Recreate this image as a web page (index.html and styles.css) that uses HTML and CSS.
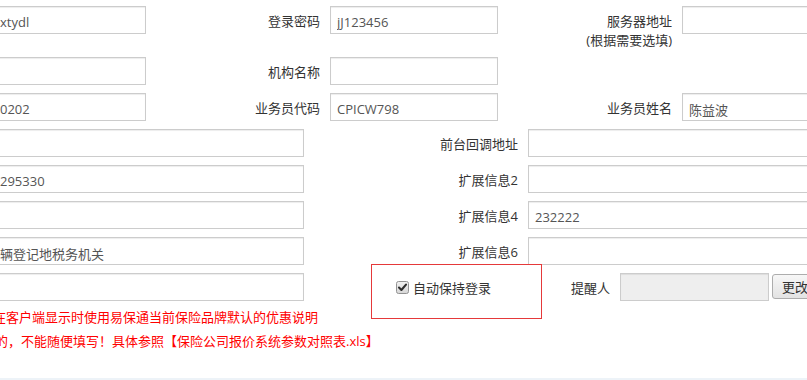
FILE: index.html
```html
<!DOCTYPE html>
<html lang="zh-CN">
<head>
<meta charset="utf-8">
<title>参数设置</title>
<link rel="stylesheet" href="styles.css">
</head>
<body>
<div class="viewport">
  <div class="sheet">
    <div class="row row-lead">
      <input class="field field-lead-s" value="xtydl">
      <label class="lbl lbl-s">登录密码</label>
      <input class="field field-m" value="jJ123456">
      <label class="lbl lbl-s">服务器地址<br>(根据需要选填)</label>
      <input class="field field-l" value="">
    </div>
    <div class="row">
      <input class="field field-lead-s" value="">
      <label class="lbl lbl-s">机构名称</label>
      <input class="field field-m" value="">
    </div>
    <div class="row">
      <input class="field field-lead-s" value="0202">
      <label class="lbl lbl-s">业务员代码</label>
      <input class="field field-m" value="CPICW798">
      <label class="lbl lbl-s">业务员姓名</label>
      <input class="field field-l" value="陈益波">
    </div>
    <div class="row">
      <input class="field field-lead-w" value="">
      <label class="lbl lbl-w">前台回调地址</label>
      <input class="field field-xl" value="">
    </div>
    <div class="row">
      <input class="field field-lead-w" value="295330">
      <label class="lbl lbl-w">扩展信息2</label>
      <input class="field field-xl" value="">
    </div>
    <div class="row">
      <input class="field field-lead-w" value="">
      <label class="lbl lbl-w">扩展信息4</label>
      <input class="field field-xl" value="232222">
    </div>
    <div class="row">
      <input class="field field-lead-w" value="辆登记地税务机关">
      <label class="lbl lbl-w">扩展信息6</label>
      <input class="field field-xl" value="">
    </div>
    <div class="row">
      <input class="field field-lead-w" value="">
      <div class="keep">
        <span class="check"><svg width="13" height="13" viewBox="0 0 13 13"><defs><linearGradient id="cg" x1="0" y1="0" x2="0" y2="1"><stop offset="0" stop-color="#f2f2f2"/><stop offset="1" stop-color="#d6d6d6"/></linearGradient></defs><rect x="0.5" y="0.5" width="12" height="12" rx="2" fill="url(#cg)" stroke="#939393"/><path d="M3 6.6 L5.4 9 L10 3.6" fill="none" stroke="#2e2e2e" stroke-width="2.1" stroke-linecap="round" stroke-linejoin="round"/></svg></span>
        <span class="keep-text">自动保持登录</span>
      </div>
      <label class="lbl lbl-inline">提醒人</label>
      <input class="field field-remind" value="" disabled>
      <button class="btn" type="button">更改</button>
    </div>
  </div>
  <div class="notes">
    <p class="note note-1">在客户端显示时使用易保通当前保险品牌默认的优惠说明</p>
    <p class="note note-2">的，不能随便填写！具体参照【保险公司报价系统参数对照表.xls】</p>
  </div>
  <div class="foot"></div>
  <div class="highlight"></div>
</div>
</body>
</html>
```

FILE: styles.css
```css
* { box-sizing: border-box; }
html, body { margin: 0; padding: 0; background: #fff; }
body {
  font-family: "Open Sans", "Noto Sans CJK SC", sans-serif;
  font-size: 13px;
  color: #333;
  overflow: hidden;
}
.viewport {
  position: relative;
  width: 807px;
  height: 380px;
  overflow: hidden;
}
.sheet { padding-top: 2px; }
.row {
  display: flex;
  align-items: flex-start;
  flex-wrap: nowrap;
  padding: 4px 0;
  white-space: nowrap;
}
.row-lead { padding-bottom: 3px; }
.field {
  flex-shrink: 0;
  height: 28px;
  margin: 0;
  padding: 4px 6px 0;
  border: 1px solid #ccc;
  border-radius: 0;
  box-shadow: inset 0 1px 1px rgba(0,0,0,0.075);
  background: #fff;
  font-family: "Open Sans", "Noto Sans CJK SC", sans-serif;
  font-size: 13px;
  color: #555;
  outline: none;
}
.field-lead-s { width: 153px; margin-left: -7px; }
.field-lead-w { width: 311px; margin-left: -7px; }
.field-m { width: 168px; }
.field-l { width: 200px; }
.field-xl { width: 300px; }
.field-remind {
  width: 149px;
  margin-left: 10px;
  background: #eee;
}
.lbl {
  flex-shrink: 0;
  display: block;
  padding: 6px 10px 0 0;
  line-height: 19px;
  text-align: right;
  color: #333;
}
.lbl-s { width: 184px; }
.lbl-w { width: 224px; }
.lbl-inline { width: auto; padding-right: 0; }
.keep {
  flex-shrink: 0;
  display: flex;
  align-items: center;
  gap: 4px;
  height: 28px;
  margin-left: 92px;
  margin-right: 80px;
}
.check { display: block; width: 13px; height: 13px; }
.check svg { display: block; }
.keep-text { line-height: 19px; padding-top: 3px; color: #333; }
.btn {
  flex-shrink: 0;
  height: 25px;
  width: 48px;
  margin: 1px 0 0 3px;
  padding: 0 0 0 9px;
  text-align: left;
  border: 1px solid #adadad;
  border-radius: 3px;
  background: linear-gradient(#f7f7f7, #e3e3e3);
  font-family: "Open Sans", "Noto Sans CJK SC", sans-serif;
  font-size: 13px;
  color: #333;
}
.notes { margin-left: -7px; white-space: nowrap; }
.note {
  margin: 0;
  line-height: 24px;
  color: #f00;
}
.note-2 { margin-left: 2px; }
.foot {
  margin-top: 25px;
  height: 2px;
  background: #edf3f8;
}
.highlight {
  position: absolute;
  left: 371px;
  top: 264px;
  width: 171px;
  height: 55px;
  border: 1px solid #e5393a;
  pointer-events: none;
}
```
